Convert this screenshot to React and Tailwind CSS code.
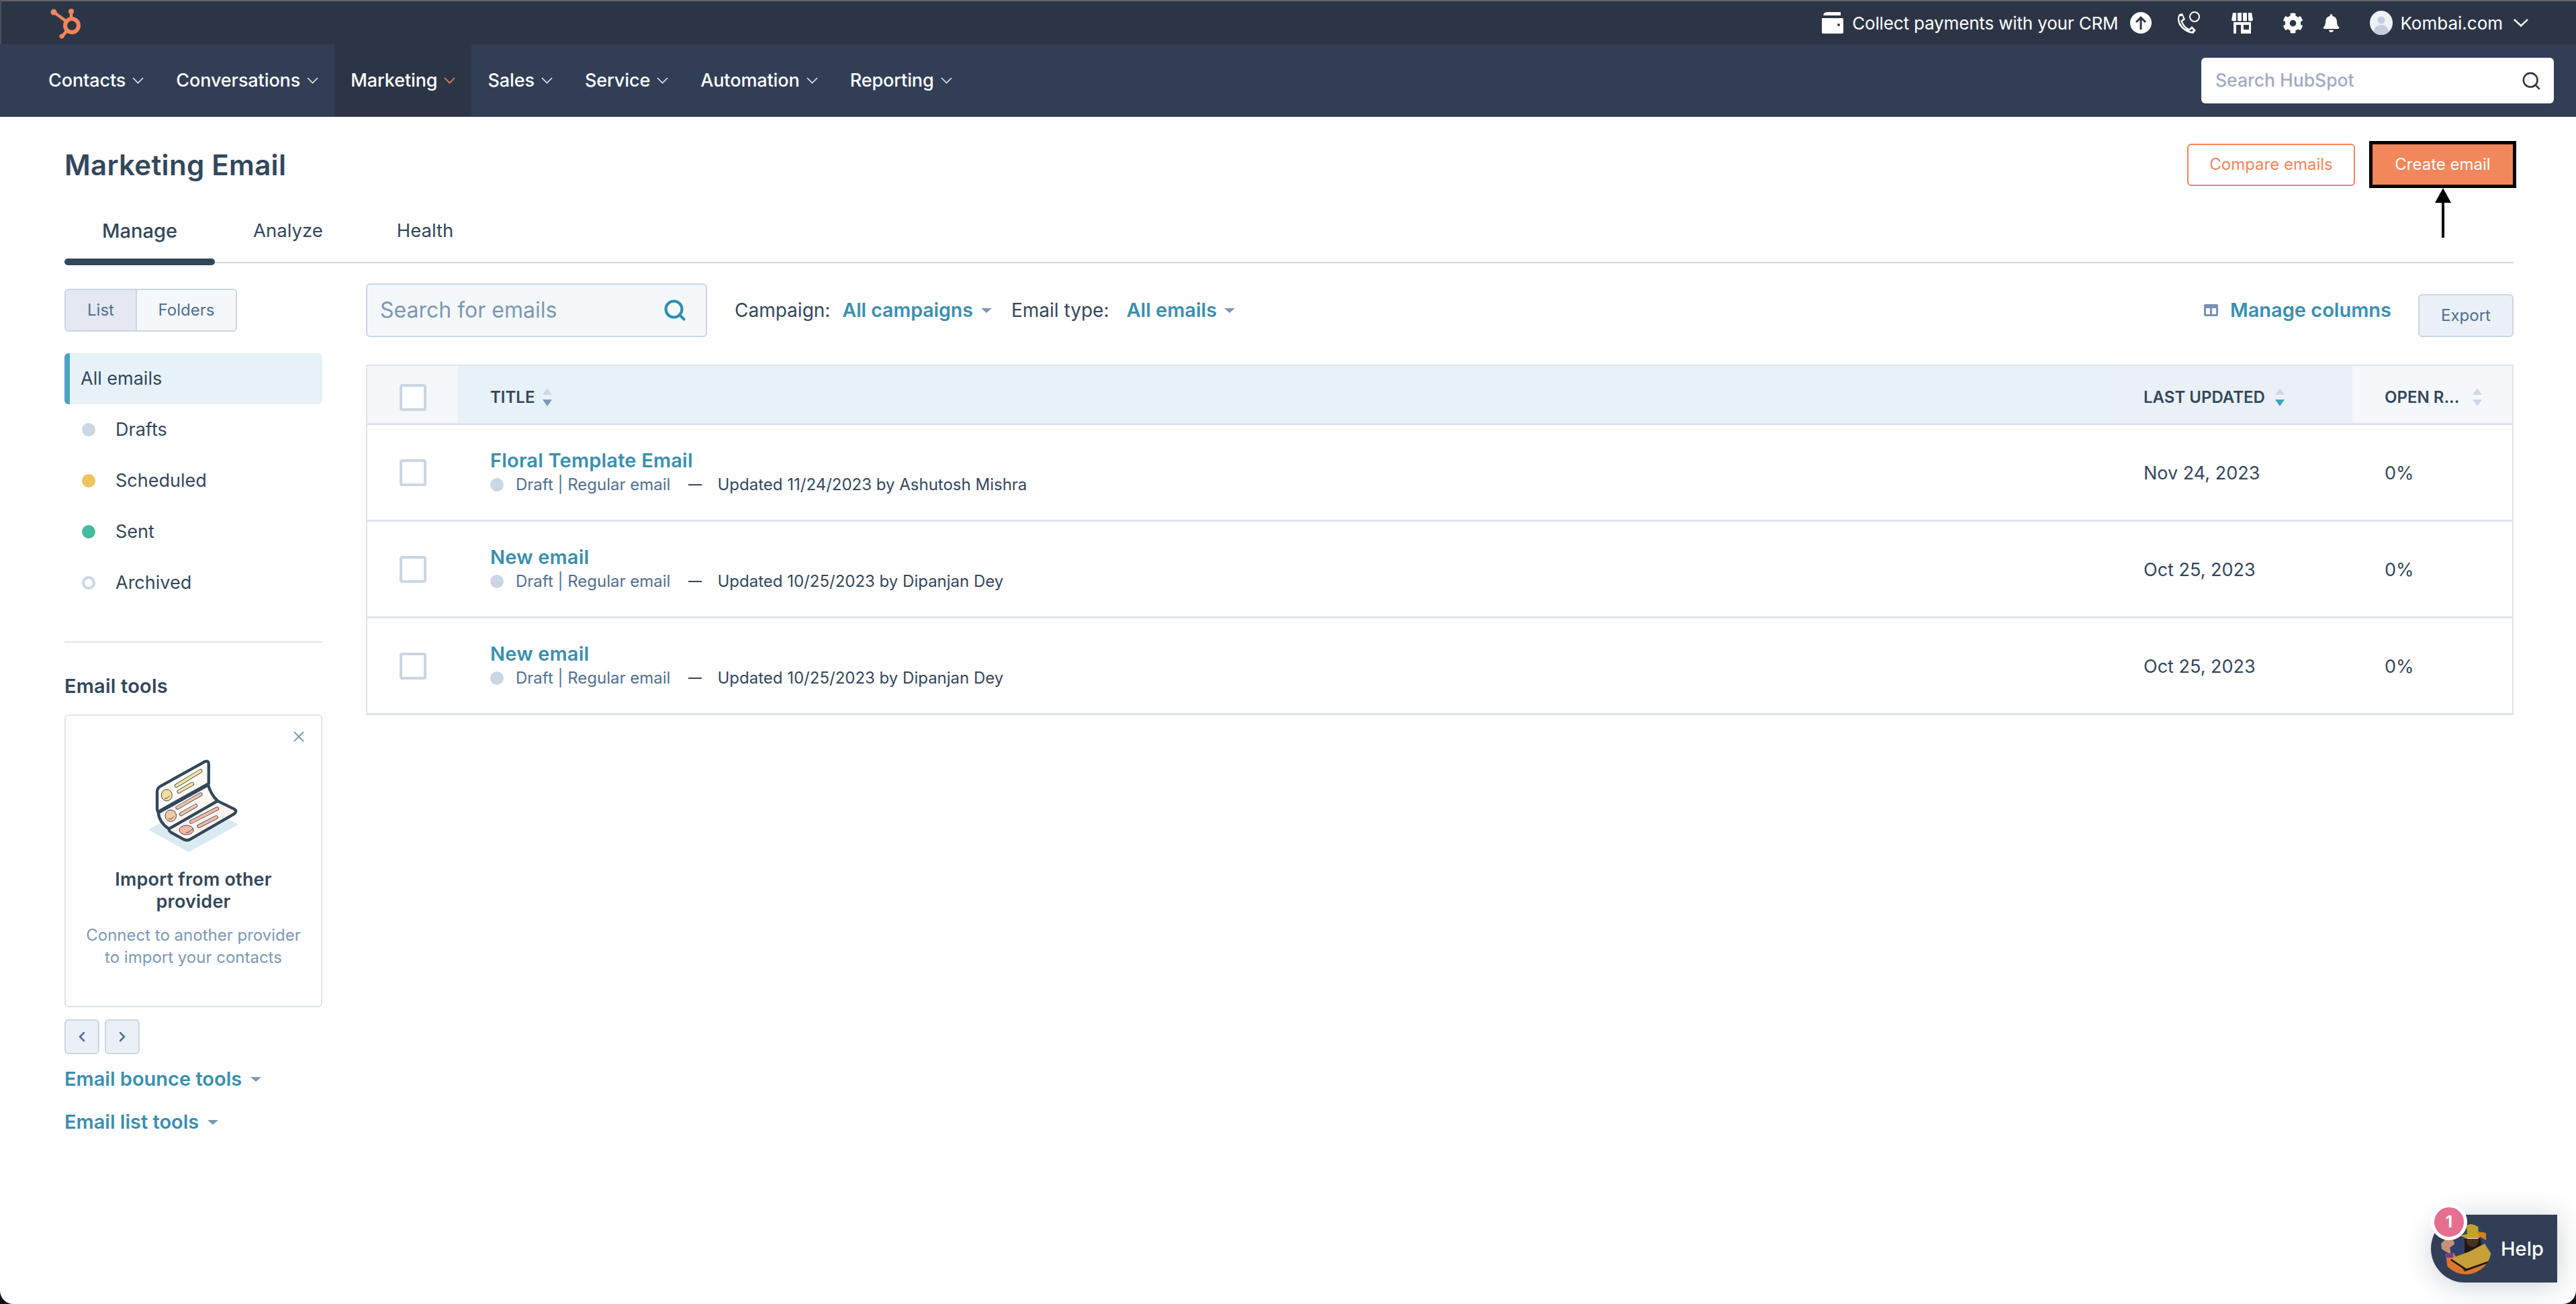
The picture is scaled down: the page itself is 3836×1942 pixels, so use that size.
import React from 'react';
import { Search, X, ChevronLeft, ChevronRight } from 'lucide-react';
import { FaBell, FaCog } from 'react-icons/fa';

const navItems = ['Contacts', 'Conversations', 'Marketing', 'Sales', 'Service', 'Automation', 'Reporting'];
const statuses = [
  { label: 'Drafts', dot: 'bg-[#cbd6e2]' },
  { label: 'Scheduled', dot: 'bg-[#f0c35f]' },
  { label: 'Sent', dot: 'bg-[#45bb9f]' },
  { label: 'Archived', dot: 'border-[4px] border-[#cbd6e2] bg-white' },
];
const emails = [
  { title: 'Floral Template Email', updated: 'Updated 11/24/2023 by Ashutosh Mishra', date: 'Nov 24, 2023' },
  { title: 'New email', updated: 'Updated 10/25/2023 by Dipanjan Dey', date: 'Oct 25, 2023' },
  { title: 'New email', updated: 'Updated 10/25/2023 by Dipanjan Dey', date: 'Oct 25, 2023' },
];

function Logo() {
  return (
    <svg width="46" height="46" viewBox="0 0 46 46" fill="none" className="mt-[1px]">
      <circle cx="32" cy="26" r="10" stroke="#f2855a" strokeWidth="6" />
      <path d="M5 6 L24 20 M31 6 V15 M25 33 L18 42" stroke="#f2855a" strokeWidth="4.5" strokeLinecap="round" />
      <circle cx="5" cy="6" r="4.5" fill="#f2855a" />
      <circle cx="31" cy="5" r="4" fill="#f2855a" />
      <circle cx="17" cy="42" r="3.5" fill="#f2855a" />
    </svg>
  );
}

function Wallet() {
  return (
    <svg width="32" height="32" viewBox="0 0 32 32">
      <path d="M2 6 Q2 0 8 0 H28 V5 H2 Z" fill="#fff" />
      <path d="M0 9 H30 Q32 9 32 11 V30 Q32 32 30 32 H2 Q0 32 0 30 Z" fill="#fff" />
      <circle cx="25" cy="19" r="2" fill="#2d3648" />
    </svg>
  );
}

function PhoneGlyph() {
  return (
    <svg width="38" height="36" viewBox="0 0 38 36" fill="none">
      <path d="M6 5 L11 4 L15 13 L11 16 Q14 24 21 27 L25 23 L31 29 L27 34 Q14 33 6 21 Q2 12 6 5 Z" fill="#fff" />
      <path d="M11 8 L12 12 L8 15 Q12 26 21 30 L25 27 L27 29 L25 31 Q14 29 8 19 Q5 13 7 8 Z" fill="#2d3648" />
      <circle cx="29" cy="9" r="7" stroke="#fff" strokeWidth="2" />
    </svg>
  );
}

function Store() {
  return (
    <svg width="32" height="32" viewBox="0 0 32 32">
      <path d="M2 1 H30 L32 12 Q28 15 24 12 Q20 15 16 12 Q12 15 8 12 Q4 15 0 12 Z" fill="#fff" />
      <path d="M8 1 V13 M16 1 V13 M24 1 V13" stroke="#2d3648" strokeWidth="2" />
      <path d="M3 15 H29 V32 H3 Z" fill="#fff" />
      <path d="M7 19 H14 V32 H7 Z M18 19 H26 V26 H18 Z" fill="#2d3648" />
    </svg>
  );
}

function Avatar() {
  return (
    <svg width="34" height="36" viewBox="0 0 34 36" className="shrink-0">
      <defs>
        <clipPath id="avatar-clip">
          <ellipse cx="17" cy="18" rx="17" ry="18" />
        </clipPath>
      </defs>
      <g clipPath="url(#avatar-clip)">
        <rect width="34" height="36" fill="#eef1f6" />
        <circle cx="17" cy="14" r="5.5" fill="#c3cede" />
        <ellipse cx="17" cy="31" rx="11" ry="10" fill="#c3cede" />
      </g>
    </svg>
  );
}

function Chevron({ width, height, stroke, className }) {
  return (
    <svg width={width} height={height} viewBox={`0 0 ${width} ${height}`} fill="none" className={className}>
      <path d={`M1 1 L${width / 2} ${height - 1.5} L${width - 1} 1`} stroke="currentColor" strokeWidth={stroke} />
    </svg>
  );
}

function Caret({ className = 'border-t-[#7c98b6]' }) {
  return <span className={`inline-block h-0 w-0 border-x-[8px] border-t-[7px] border-x-transparent ${className}`} />;
}

function SortIcon({ up = 'border-b-[#cfd9e5]', down = 'border-t-[#cfd9e5]' }) {
  return (
    <span className="flex flex-col items-center gap-[7px]">
      <span className={`h-0 w-0 border-x-[7px] border-b-[10px] border-x-transparent ${up}`} />
      <span className={`h-0 w-0 border-x-[7px] border-t-[10px] border-x-transparent ${down}`} />
    </span>
  );
}

function Checkbox() {
  return <span className="block h-[40px] w-[40px] rounded-[4px] border-[4px] border-[#cbd6e2] bg-white" />;
}

function Illustration() {
  const dark = '#33475b';
  const bar = (x1, y1, x2, y2, color) => (
    <g strokeLinecap="round">
      <path d={`M${x1} ${y1} L${x2} ${y2}`} stroke={dark} strokeWidth="17" />
      <path d={`M${x1} ${y1} L${x2} ${y2}`} stroke={color} strokeWidth="12" />
    </g>
  );
  return (
    <svg width="137" height="143" viewBox="180 80 410 430" fill="none">
      <path d="M190 400 L400 290 L576 378 L362 495 Z" fill="#d9eaf1" stroke="#d9eaf1" strokeWidth="10" strokeLinejoin="round" />
      <path d="M226 325 L450 200 Q460 240 492 272 L275 398 Q232 370 226 325 Z" fill="#fdf8f4" stroke={dark} strokeWidth="13" strokeLinejoin="round" />
      <path d="M492 272 L566 308 Q582 318 566 330 L372 442 Q356 452 340 444 L282 412 Q266 398 282 392 Z" fill="#fdf3ee" stroke={dark} strokeWidth="13" strokeLinejoin="round" />
      <path d="M221 305 V232 Q221 214 236 206 L434 96 Q452 88 452 108 V194 L226 320 Q221 318 221 305 Z" fill="#fdfaf3" stroke={dark} strokeWidth="13" strokeLinejoin="round" />
      <ellipse cx="264" cy="246" rx="24" ry="26" fill="#f7dc9b" stroke={dark} strokeWidth="3" />
      <path d="M254 262 Q268 262 276 250" stroke={dark} strokeWidth="3" />
      <ellipse cx="282" cy="338" rx="25" ry="26" fill="#f6c9a5" stroke={dark} strokeWidth="3" />
      <path d="M272 352 Q288 356 296 342" stroke={dark} strokeWidth="3" />
      <ellipse cx="352" cy="402" rx="32" ry="21" fill="#f5b9a1" stroke={dark} strokeWidth="3" />
      <path d="M350 414 Q370 412 380 396" stroke={dark} strokeWidth="3" />
      {bar(307, 204, 415, 138, '#f7e3a1')}
      {bar(318, 230, 378, 196, '#f7e3a1')}
      {bar(312, 302, 416, 242, '#f6c5a5')}
      {bar(328, 331, 394, 293, '#f6c5a5')}
      {bar(374, 366, 490, 306, '#f5b9a1')}
      {bar(408, 385, 486, 345, '#f5b9a1')}
    </svg>
  );
}

function HelpAvatar() {
  return (
    <svg width="76" height="76" viewBox="0 0 76 76" className="shrink-0">
      <defs>
        <clipPath id="help-clip">
          <circle cx="38" cy="38" r="38" />
        </clipPath>
      </defs>
      <g clipPath="url(#help-clip)">
        <rect width="76" height="76" fill="#2f4168" />
        <path d="M8 46 L20 44 L36 72 L74 56 L76 76 H12 Z" fill="#d9772b" />
        <path d="M36 23 H60 L62 44 H36 Z" fill="#1f1812" />
        <path d="M16 52 L43 42 L66 30 L76 46 L73 57 L39 69 Z" fill="#c79f37" />
        <path d="M16 54 L39 69 L73 57" stroke="#17120c" strokeWidth="2.5" fill="none" />
        <ellipse cx="48" cy="26" rx="9" ry="9" fill="#4a3022" />
        <path d="M40 19 H56 V23 H40 Z" fill="#e9e6d8" />
        <path d="M29 18 Q48 13 66 17 L56 22 L38 22 Z" fill="#c9a22f" />
        <path d="M39 3 Q48 -1 56 2 L57 16 L40 17 Z" fill="#c2a22e" />
        <path d="M54 12 L68 14 L68 25 L58 19 Z" fill="#d6821f" />
        <path d="M1 30 L7 24 L8 19 L12 22 L20 26 L21 31 L14 36 L16 46 L8 42 L2 38 Z" fill="#c98f76" />
        <rect x="9" y="44" width="10" height="7" fill="#7a3b8f" />
      </g>
    </svg>
  );
}

export default function App() {
  return (
    <div className="h-[1942px] w-full bg-[#0b0d14] font-['Inter',sans-serif]">
      <div className="relative flex h-full flex-col overflow-hidden rounded-b-[20px] bg-white text-[#33475b]">
        <header>
          <div className="flex h-[66px] items-center justify-between border-t-2 border-l-2 border-t-[#5f6068] border-l-[#4a4f5c] bg-[#2c3546] pr-[71px] pl-[73px]">
            <Logo />
            <div className="flex items-center text-white">
              <Wallet />
              <span className="ml-[13px] text-[26px] tracking-[-0.15px]">Collect payments with your CRM</span>
              <span className="ml-[18px] flex h-[32px] w-[32px] items-center justify-center rounded-full bg-white">
                <svg width="20" height="22" viewBox="0 0 20 22" fill="none">
                  <path d="M10 21 V3 M3 10 L10 3 L17 10" stroke="#2c3546" strokeWidth="3" />
                </svg>
              </span>
              <span className="ml-[35px]"><PhoneGlyph /></span>
              <span className="ml-[46px]"><Store /></span>
              <FaCog className="ml-[44px] text-[31px]" />
              <FaBell className="ml-[28px] text-[27px]" />
              <span className="ml-[44px]"><Avatar /></span>
              <span className="ml-[11px] text-[26px]">Kombai.com</span>
              <Chevron width={22} height={12} stroke={2.5} className="ml-[16px]" />
            </div>
          </div>
          <nav className="flex h-[108px] items-center justify-between bg-[#323e55] pr-[33px] pl-[48px]">
            <ul className="flex h-full">
              {navItems.map((item) => (
                <li
                  key={item}
                  className={`flex h-full items-center gap-[10px] px-[24px] text-[27px] font-medium tracking-[-0.1px] text-white ${item === 'Marketing' ? 'bg-[#2c3546]' : ''}`}
                >
                  {item}
                  <Chevron width={17} height={10} stroke={1.75} className={item === 'Marketing' ? 'text-[#f2855a]' : 'text-[#dfe3eb]'} />
                </li>
              ))}
            </ul>
            <div className="flex h-[68px] w-[525px] items-center justify-between rounded-[6px] bg-white pr-[18px] pl-[21px]">
              <span className="text-[26.5px] font-medium text-[#9fabc5]">Search HubSpot</span>
              <Search size={31} strokeWidth={2} className="text-[#2c3546]" />
            </div>
          </nav>
        </header>

        <main className="flex flex-1 flex-col pr-[93px] pl-[96px]">
          <div className="flex items-center justify-between pt-[36px]">
            <h1 className="text-[42px] font-semibold tracking-[0.3px]">Marketing Email</h1>
            <div className="-mr-[4px] flex items-center gap-[21px]">
              <button className="flex h-[63px] w-[250px] items-center justify-center rounded-[6px] border-2 border-[#f2855a] bg-white text-[24px] text-[#f2855a]">
                Compare emails
              </button>
              <div className="relative">
                <button className="flex h-[70px] w-[219px] items-center justify-center border-[5px] border-black bg-[#f2875b] text-[24px] text-white">
                  Create email
                </button>
                <svg width="26" height="76" viewBox="0 0 26 76" className="absolute top-[69px] left-[97px]">
                  <path d="M13 1 L25 23 H15 V75 H11 V23 H1 Z" fill="#000" />
                </svg>
              </div>
            </div>
          </div>

          <div className="relative mt-[20px] flex h-[92px] items-start border-b-2 border-[#cbd6e2] text-[27.5px]">
            <span className="relative flex h-[90px] w-[224px] items-start justify-center pt-[22px] text-[29px] font-medium">
              Manage
              <span className="absolute -bottom-[5px] left-0 h-[10px] w-full rounded-full bg-[#33475b]" />
            </span>
            <span className="pt-[23px] pr-[54px] pl-[57px]">Analyze</span>
            <span className="px-[56px] pt-[23px]">Health</span>
          </div>

          <div className="flex flex-1 gap-[65px]">
            <aside className="w-[384px] pt-[38px]">
              <div className="flex h-[64px] w-[257px] overflow-hidden rounded-[6px] border-2 border-[#cbd6e2] text-[24px] text-[#506e91]">
                <span className="flex w-[106px] items-center justify-center border-r-2 border-[#cbd6e2] bg-[#e5e8f0]">List</span>
                <span className="flex flex-1 items-center justify-center bg-[#f5f8fa]">Folders</span>
              </div>
              <ul className="mt-[32px] text-[27px]">
                <li className="flex h-[76px] items-center rounded-[6px] border-l-[8px] border-[#4aa3c1] bg-[#e6f2f8] pl-[16px]">All emails</li>
                {statuses.map((s) => (
                  <li key={s.label} className="flex h-[76px] items-center pl-[26px]">
                    <span className={`h-[20px] w-[20px] rounded-full ${s.dot}`} />
                    <span className="ml-[30px]">{s.label}</span>
                  </li>
                ))}
              </ul>
              <div className="mt-[49px] h-[2px] bg-[#dfe3eb]" />
              <h2 className="mt-[48px] text-[29px] leading-[34px] font-semibold tracking-[0.2px]">Email tools</h2>
              <div className="relative mt-[25px] flex h-[436px] flex-col items-center rounded-[6px] border-2 border-[#dfe3eb] pt-[63px] text-center">
                <X size={26} strokeWidth={1.75} className="absolute top-[18px] right-[20px] text-[#7c98b6]" />
                <Illustration />
                <p className="mt-[21px] w-[310px] text-[27px] leading-[33px] font-semibold tracking-[0.2px]">Import from other provider</p>
                <p className="mt-[17px] w-[340px] text-[24px] leading-[33px] text-[#7c98b6]">Connect to another provider to import your contacts</p>
              </div>
              <div className="mt-[18px] flex gap-[8px]">
                <span className="flex h-[52px] w-[52px] items-center justify-center rounded-[6px] border-2 border-[#cbd6e2] bg-[#eaf0f6] text-[#506e91]"><ChevronLeft size={24} strokeWidth={2.5} /></span>
                <span className="flex h-[52px] w-[52px] items-center justify-center rounded-[6px] border-2 border-[#cbd6e2] bg-[#eaf0f6] text-[#506e91]"><ChevronRight size={24} strokeWidth={2.5} /></span>
              </div>
              <div className="mt-[20px] flex flex-col gap-[30px] text-[29px] leading-[34px] font-semibold text-[#3a8fb0]">
                <span className="flex items-center gap-[13px]">Email bounce tools <Caret /></span>
                <span className="flex items-center gap-[13px]">Email list tools <Caret /></span>
              </div>
            </aside>

            <section className="flex-1 pt-[30px]">
              <div className="flex items-start">
                <div className="flex h-[80px] w-[508px] items-center justify-between rounded-[6px] border-2 border-[#cbd6e2] bg-[#f5f8fa] pr-[28px] pl-[19px]">
                  <span className="text-[32px] text-[#7c98b6]">Search for emails</span>
                  <Search size={36} strokeWidth={2.75} className="text-[#2e8fb5]" />
                </div>
                <div className="ml-[41px] flex h-[80px] items-center text-[28px]">
                  <span>Campaign:</span>
                  <span className="ml-[18px] text-[28.5px] font-semibold text-[#3a8fb0]">All campaigns</span>
                  <Caret className="ml-[12px] border-t-[#7c98b6]" />
                  <span className="ml-[29px]">Email type:</span>
                  <span className="ml-[26px] text-[29px] font-semibold text-[#3a8fb0]">All emails</span>
                  <Caret className="ml-[11px] border-t-[#7c98b6]" />
                </div>
                <div className="ml-auto flex h-[80px] items-center text-[29px] font-semibold text-[#3a8fb0]">
                  <svg width="21" height="18" viewBox="0 0 21 18">
                    <path d="M2 0 H19 Q21 0 21 2 V16 Q21 18 19 18 H2 Q0 18 0 16 V2 Q0 0 2 0 Z" fill="#7c8fb6" />
                    <path d="M3 6 H9 V15 H3 Z M12 6 H18 V15 H12 Z" fill="#fff" />
                  </svg>
                  <span className="ml-[18px]">Manage columns</span>
                </div>
                <button className="mt-[16px] ml-[40px] flex h-[64px] w-[142px] items-center justify-center rounded-[6px] border-2 border-[#cbd6e2] bg-[#eaf0f6] text-[24px] text-[#506e91]">
                  Export
                </button>
              </div>

              <div className="mt-[41px] border-[2px] border-b-0 border-[#dfe3eb]">
                <div className="flex h-[88px] border-b-[3px] border-[#dfe3eb] text-[24px] font-semibold">
                  <div className="flex w-[135px] items-center justify-center bg-[#f5f8fa] pt-[8px]"><Checkbox /></div>
                  <div className="flex flex-1 items-center gap-[12px] bg-[#e6f2f8] pt-[8px] pl-[48px]">
                    TITLE
                    <SortIcon down="border-t-[#7c98b6]" />
                  </div>
                  <div className="flex w-[361px] items-center gap-[15px] bg-[#eaf0f6] pt-[8px] pl-[50px]">
                    LAST UPDATED
                    <SortIcon down="border-t-[#3fa2bf]" />
                  </div>
                  <div className="flex w-[238px] items-center gap-[20px] bg-[#f5f8fa] pt-[8px] pl-[48px]">
                    OPEN R...
                    <SortIcon />
                  </div>
                </div>
                {emails.map((email, index) => (
                  <div key={index} className="flex h-[144px] border-b-[3px] border-[#dfe3eb]">
                    <div className="flex w-[135px] items-center justify-center"><Checkbox /></div>
                    <div className="flex flex-1 flex-col justify-center pb-[3px] pl-[48px]">
                      <span className="text-[29px] leading-[36px] font-semibold tracking-[0.2px] text-[#3a8fb0]">{email.title}</span>
                      <span className="mt-[3px] flex items-center text-[24px] leading-[30px]">
                        <span className="h-[20px] w-[20px] rounded-full bg-[#cbd6e2]" />
                        <span className="ml-[18px] text-[#516f90]">Draft | Regular email</span>
                        <span className="ml-[27px] h-[2px] w-[20px] bg-[#33475b]" />
                        <span className="ml-[23px]">{email.updated}</span>
                      </span>
                    </div>
                    <div className="flex w-[361px] items-center pt-[3px] pl-[50px] text-[27px]">{email.date}</div>
                    <div className="flex w-[238px] items-center pt-[3px] pl-[48px] text-[27px]">0%</div>
                  </div>
                ))}
              </div>
            </section>
          </div>
        </main>

        <div className="absolute top-[1809px] left-[3620px] flex h-[101px] w-[188px] items-center rounded-l-full rounded-tr-[48px] rounded-br-[3px] bg-[#323e55] pl-[14px] shadow-[0_4px_40px_rgba(45,62,80,0.25)]">
          <HelpAvatar />
          <span className="ml-[14px] text-[29px] font-medium text-white">Help</span>
          <span className="absolute -top-[16px] left-[0px] flex h-[54px] w-[54px] items-center justify-center rounded-full border-[5px] border-white bg-[#e66e8e] text-[24px] font-bold text-white">1</span>
        </div>
      </div>
    </div>
  );
}
